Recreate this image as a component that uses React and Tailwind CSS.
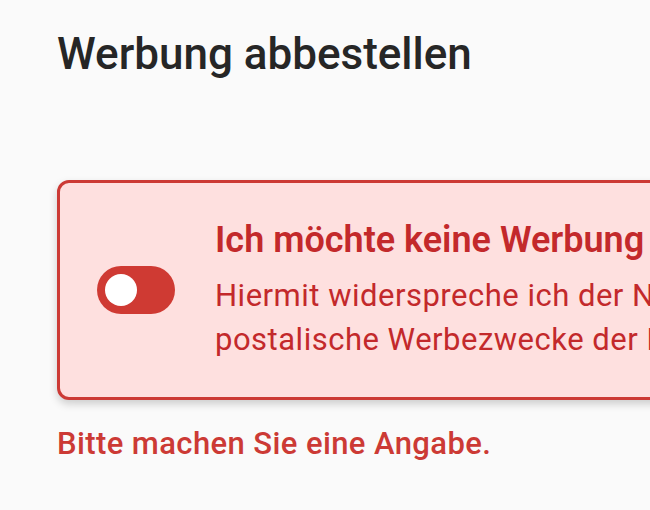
import React, { useState } from 'react'

function App() {
  const [optOut, setOptOut] = useState(false)

  return (
    <div className="min-h-screen w-full overflow-hidden bg-[#fafafa] pl-[57px] pt-[28px] font-['Roboto',sans-serif]">
      <h1 className="text-[44px] leading-[52px] font-medium text-[#262626] whitespace-nowrap">Werbung abbestellen</h1>

      <div className="mt-[100px] w-[1100px] h-[220px] flex items-center gap-[40px] pl-[37px] rounded-[12px] border-[3px] border-[#cc3a35] bg-[#fee0df] shadow-[0_4px_8px_rgba(0,0,0,0.18)]">
        <button
          type="button"
          onClick={() => setOptOut(!optOut)}
          className="shrink-0 w-[78px] h-[48px] rounded-full bg-[#cf3a33] flex items-center px-[8px]"
        >
          <span className={optOut ? 'ml-auto w-[32px] h-[32px] rounded-full bg-white' : 'w-[32px] h-[32px] rounded-full bg-white'} />
        </button>

        <div className="flex flex-col gap-[12px] text-[#c3292b] whitespace-nowrap">
          <h3 className="text-[36px] leading-[44px] font-semibold">Ich möchte keine Werbung erhalten</h3>
          <p className="text-[31px] leading-[44px] tracking-[0.5px]">
            <span className="block">Hiermit widerspreche ich der Nutzung meiner Daten für</span>
            <span className="block">postalische Werbezwecke der Firma.</span>
          </p>
        </div>
      </div>

      <p className="mt-[22px] text-[31px] leading-[44px] tracking-[0.4px] font-medium text-[#cc3a35] whitespace-nowrap">Bitte machen Sie eine Angabe.</p>
    </div>
  )
}

export default App
